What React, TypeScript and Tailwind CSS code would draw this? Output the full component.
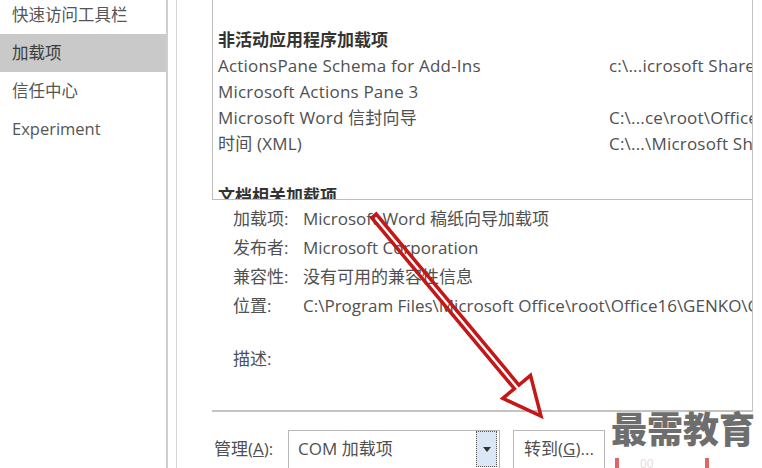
import React from "react";

const S = { x: 374, y: 216 };
const T = { x: 541, y: 416 };
const dx = T.x - S.x;
const dy = T.y - S.y;
const len = Math.sqrt(dx * dx + dy * dy);
const u = { x: dx / len, y: dy / len };
const n = { x: -u.y, y: u.x };
const B = { x: S.x + u.x * (len - 38), y: S.y + u.y * (len - 38) };
const p = (o: { x: number; y: number }, k: number) => `${(o.x + n.x * k).toFixed(1)},${(o.y + n.y * k).toFixed(1)}`;
const arrowPts = [p(S, 2.9), p(B, 2.9), p(B, 18), `${T.x},${T.y}`, p(B, -18), p(B, -2.9), p(S, -2.9)].join(" ");

const navItems = ["快速访问工具栏", "加载项", "信任中心", "Experiment"];

const rows: [string, string][] = [
  ["ActionsPane Schema for Add-Ins", "c:\\...icrosoft Shared\\VSTO"],
  ["Microsoft Actions Pane 3", ""],
  ["Microsoft Word 信封向导", "C:\\...ce\\root\\Office16\\ADDINS"],
  ["时间 (XML)", "C:\\...\\Microsoft Shared\\Smart Tag"],
];

const details: [string, string][] = [
  ["加载项:", "Microsoft Word 稿纸向导加载项"],
  ["发布者:", "Microsoft Corporation"],
  ["兼容性:", "没有可用的兼容性信息"],
  ["位置:", "C:\\Program Files\\Microsoft Office\\root\\Office16\\GENKO\\GENKO.DLL"],
];

export default function App() {
  return (
    <div
      className="relative w-[762px] h-[468px] overflow-hidden bg-white flex text-[#505050] text-[17px]"
      style={{ fontFamily: '"Open Sans", "Noto Sans CJK SC", sans-serif' }}
    >
      {/* Left nav */}
      <div className="w-[166px] shrink-0 flex flex-col mt-[-4px]">
        {navItems.map((t, i) => (
          <div
            key={t}
            className={`h-[38px] shrink-0 flex items-center pl-[12px] text-[16.5px] ${i === 1 ? "bg-[#c9c9c9] text-[#3c3c3c]" : "text-[#555]"}`}
          >
            {t}
          </div>
        ))}
      </div>
      <div className="w-[2px] shrink-0 bg-[#cfcfcf]" />
      <div className="w-[8px] shrink-0" />
      <div className="w-[1px] shrink-0 bg-[#d6d6d6]" />

      {/* Content */}
      <div className="flex-1 min-w-0 flex flex-col pl-[35px] pr-[9px]">
        <div className="h-[412px] shrink-0 border-r-[1px] border-b-[2px] border-[#c3c3c3] flex flex-col overflow-hidden">
          {/* list box */}
          <div className="h-[200px] shrink-0 border-l border-b border-[#bdbdbd] overflow-hidden pl-[5px] pt-[27px]">
            <div className="h-[26px] flex items-center font-bold text-[#333] whitespace-nowrap">非活动应用程序加载项</div>
            {rows.map(([a, b]) => (
              <div key={a} className="h-[26px] flex items-center whitespace-nowrap tracking-[0.2px]">
                <span className="w-[391px] shrink-0">{a}</span>
                <span>{b}</span>
              </div>
            ))}
            <div className="h-[26px]" />
            <div className="h-[26px] flex items-center font-bold text-[#333] whitespace-nowrap">文档相关加载项</div>
          </div>
          {/* details */}
          <div className="pt-[4px] pl-[21px] flex flex-col overflow-hidden">
            {details.map(([a, b]) => (
              <div key={a} className="h-[29px] flex items-center whitespace-nowrap">
                <span className="w-[70px] shrink-0">{a}</span>
                <span>{b}</span>
              </div>
            ))}
            <div className="h-[24px]" />
            <div className="h-[29px] flex items-center">描述:</div>
          </div>
        </div>

        {/* bottom row */}
        <div className="flex items-start pt-[18px] pl-[2px]">
          <div className="h-[38px] flex items-center w-[74px] shrink-0 whitespace-nowrap">
            管理(<span className="underline">A</span>):
          </div>
          <div className="w-[212px] h-[50px] shrink-0 border border-[#b8b8b8] flex items-start">
            <div className="flex-1 h-[36px] flex items-center pl-[9px] whitespace-nowrap">COM 加载项</div>
            <div className="w-[21px] h-[36px] mr-[2px] border border-dotted border-[#555] bg-[#dbe7f6] flex items-center justify-center">
              <svg width="8" height="5" viewBox="0 0 8 5">
                <path d="M0 0 L8 0 L4 5 Z" fill="#333" />
              </svg>
            </div>
          </div>
          <div className="ml-[13px] w-[92px] h-[50px] shrink-0 border border-[#b8b8b8] flex items-start justify-center">
            <div className="h-[36px] flex items-center whitespace-nowrap">
              转到(<span className="underline">G</span>)...
            </div>
          </div>
        </div>
      </div>

      {/* watermark */}
      <div
        className="absolute left-[611px] top-[405px] text-[36px] font-black text-[#6e6e6e] leading-[44px]"
        style={{ fontFamily: '"Noto Sans CJK SC", sans-serif' }}
      >
        最需教育
      </div>
      <div className="absolute left-[615px] top-[458px] w-[4px] h-[10px] bg-[#d66]" />
      <div className="absolute left-[640px] top-[455px] text-[12px] text-[#eadada]">00</div>
      <div className="absolute left-[705px] top-[458px] w-[4px] h-[10px] bg-[#d66]" />

      {/* red arrow */}
      <svg className="absolute left-0 top-0 pointer-events-none" width="762" height="468" viewBox="0 0 762 468">
        <polygon points={arrowPts} fill="none" stroke="#c41818" strokeWidth="3.5" strokeLinejoin="miter" />
      </svg>
    </div>
  );
}
